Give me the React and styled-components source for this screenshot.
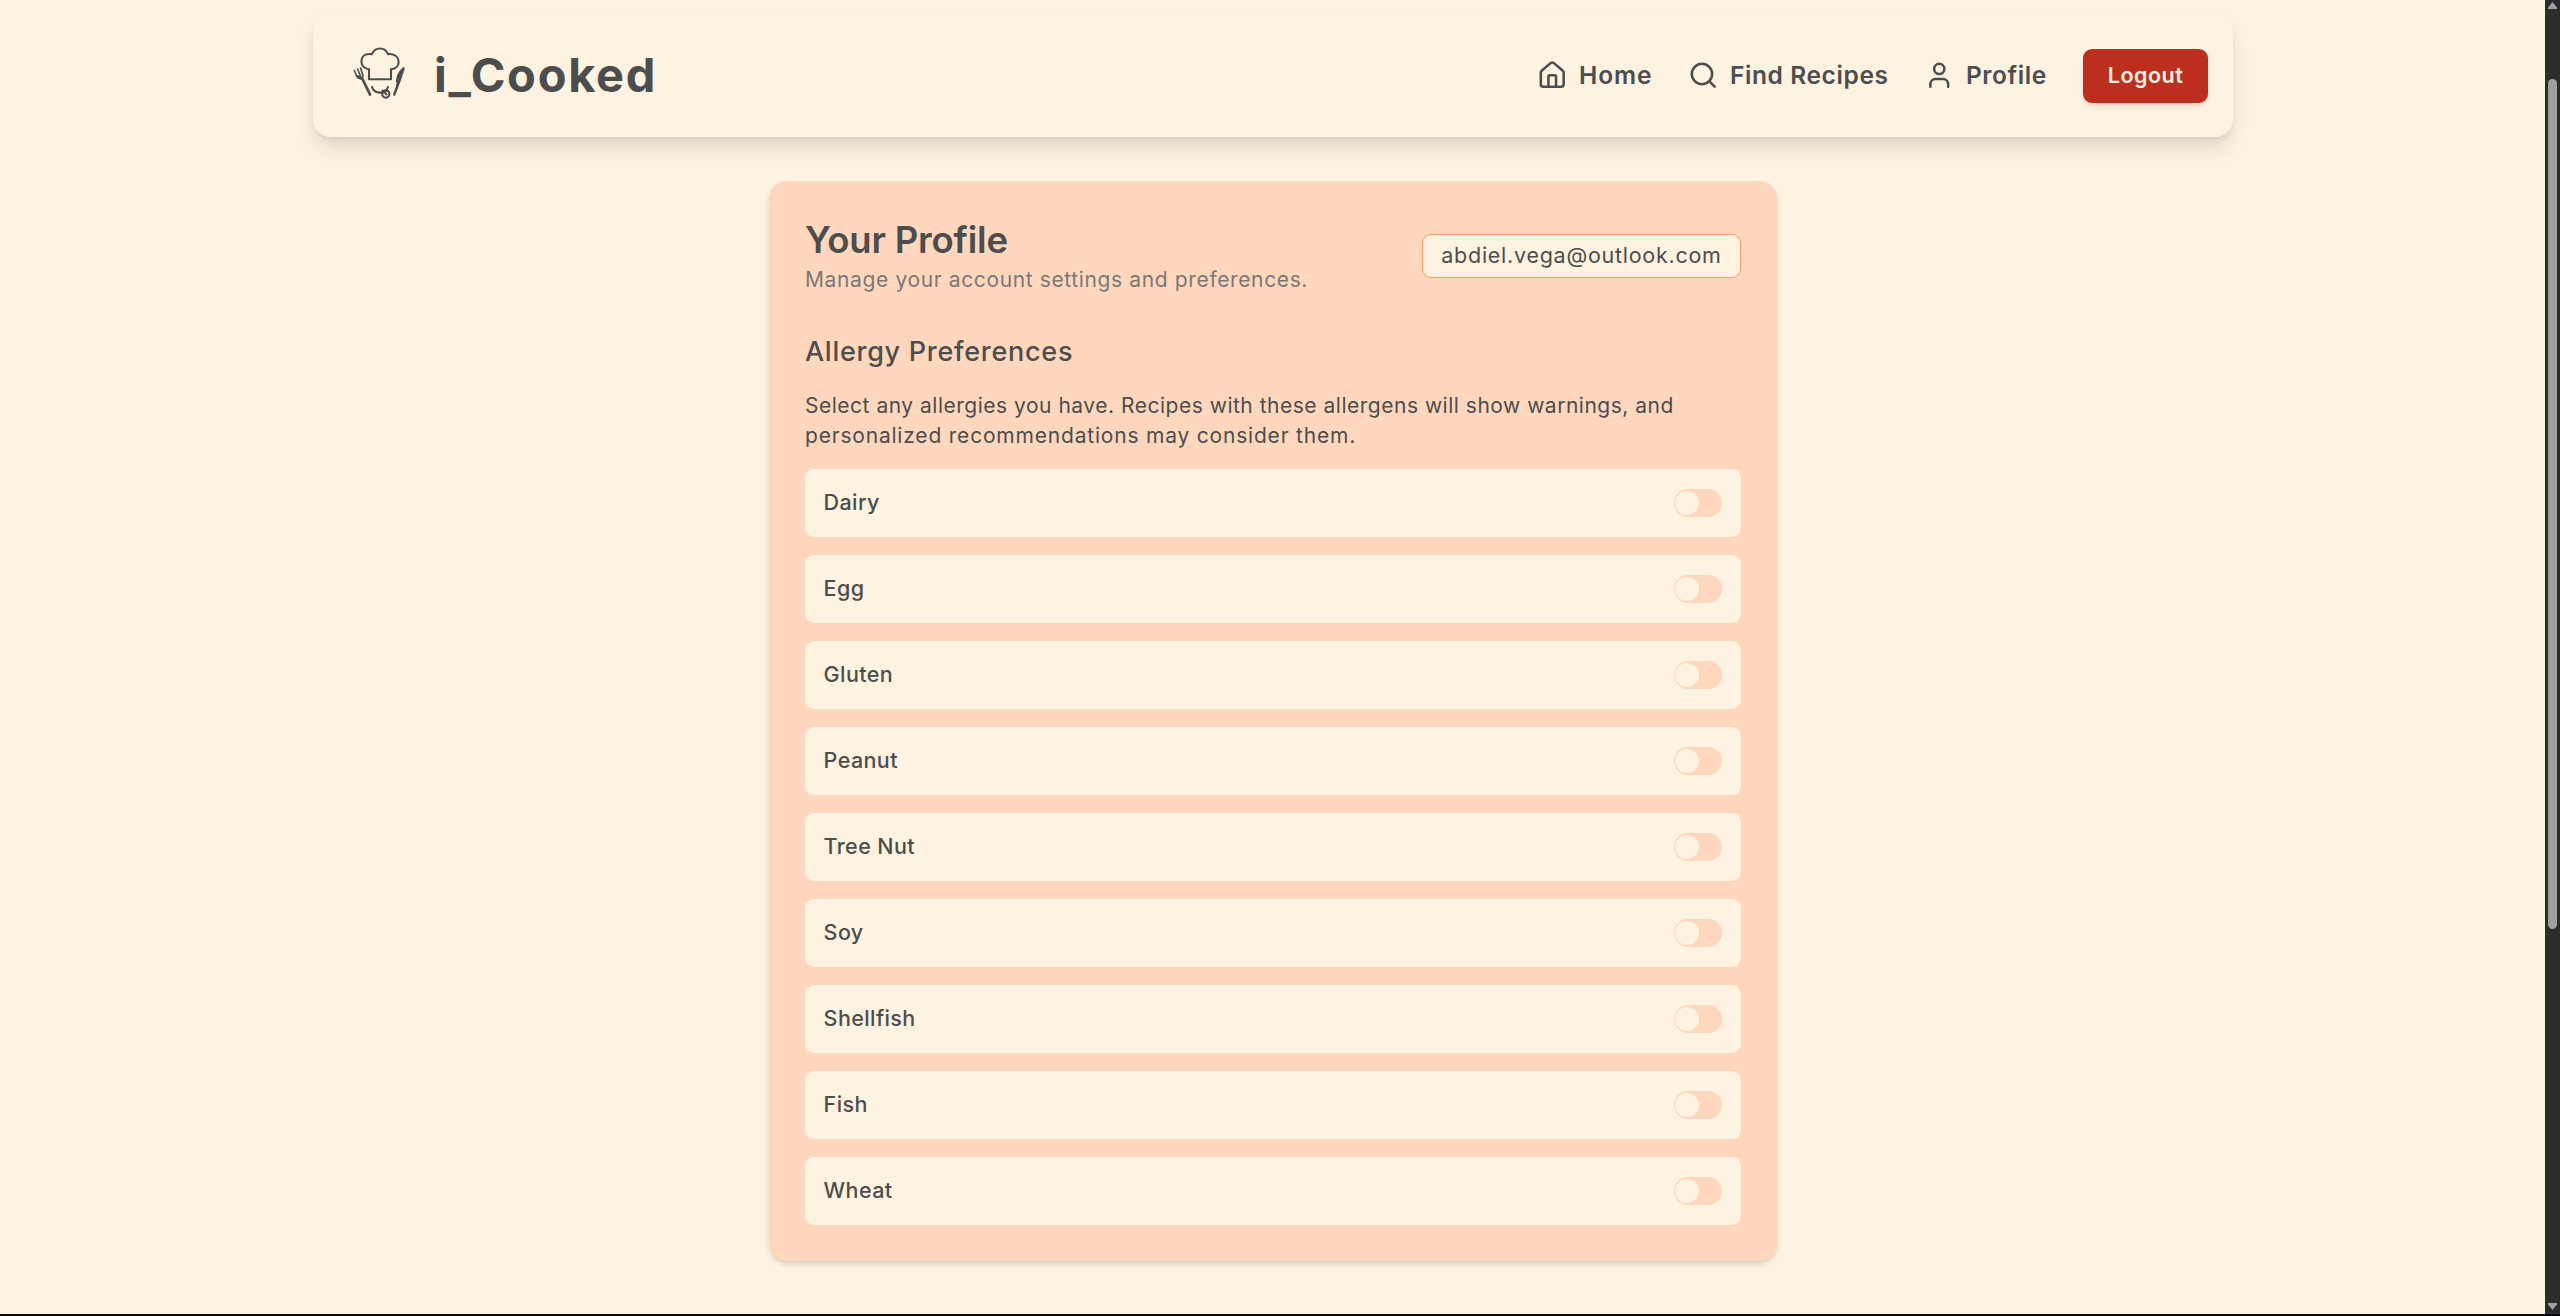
import React from "react";
import styled, { createGlobalStyle } from "styled-components";
import { House, Search, User } from "lucide-react";

const Global = createGlobalStyle`
  *, *::before, *::after { box-sizing: border-box; }
  html { font-size: 18px; overflow: hidden; }
  body { margin: 0; background: #fef2e0; color: #4c4d4d; font-family: Inter, "Open Sans", sans-serif; }
  h1, h2, p, ul { margin: 0; padding: 0; }
`;
const Screen = styled.div`display: flex; height: 1316px; width: 2560px; overflow: hidden; border-bottom: 2px solid #08090c; background: #fef2e0;`;
const Page = styled.div`flex: 1; display: flex; flex-direction: column; align-items: center; padding: 14px 0 0 1px; overflow: hidden;`;
const Header = styled.header`
  display: flex; flex: none; align-items: center; justify-content: space-between; width: 1920px; height: 123px; padding: 0 25px 0 40px;
  border-radius: 18px; background: #fef2e1;
  box-shadow: 0 12px 22px -3px rgba(0, 0, 0, 0.13), 0 4px 8px -4px rgba(0, 0, 0, 0.1);
`;
const Brand = styled.div`display: flex; align-items: center; gap: 29px; padding-bottom: 2px; svg { flex: none; margin-bottom: 3px; }`;
const Fit = styled.span`
  display: inline-block; white-space: nowrap; font-size: ${(p) => p.$size}px; font-weight: ${(p) => p.$weight || 400};
  letter-spacing: ${(p) => p.$track || 0}px; line-height: ${(p) => p.$line || 27}px; color: ${(p) => p.$color || "inherit"};
`;
const Nav = styled.nav`display: flex; align-items: center; gap: 35px;`;
const NavLink = styled.a`display: flex; align-items: center; gap: 11.5px; width: ${(p) => p.$w}px; height: 54px; svg { flex: none; }`;
const Logout = styled.button`
  width: 125px; height: 54px; border: 0; border-radius: 9px; padding: 0; background: #bc2e1e; color: #fef2e0; font-family: inherit;
  box-shadow: 0 4px 6px -1px rgba(0, 0, 0, 0.1), 0 2px 4px -2px rgba(0, 0, 0, 0.1);
`;
const Card = styled.main`
  flex: none; width: 1008px; height: 1080px; margin-top: 44px; padding: 36px; border-radius: 18px; background: #ffd7bd;
  box-shadow: 0 4px 7px -1px rgba(0, 0, 0, 0.12), 0 2px 4px -2px rgba(0, 0, 0, 0.1);
`;
const CardHead = styled.div`display: flex; align-items: center; justify-content: space-between; height: 78px;`;
const Intro = styled.div`padding-top: 2px;`;
const Title = styled.h1`font-size: 36.5px; line-height: 45px; font-weight: 600; letter-spacing: -0.2px;`;
const Email = styled.div`display: flex; align-items: center; justify-content: center; width: 319px; height: 44px; padding-bottom: 1px; border: 1px solid #ff9b69; border-radius: 9px; background: #fef2e0;`;
const Section = styled.h2`margin-top: 39px; line-height: 36px; font-size: 27px; font-weight: 500; letter-spacing: 0.72px;`;
const Copy = styled.p`margin-top: 21px; display: flex; flex-direction: column; align-items: flex-start; line-height: 30px;`;
const List = styled.ul`display: grid; gap: 18px; margin-top: 18px; list-style: none;`;
const Row = styled.li`display: flex; align-items: center; justify-content: space-between; height: 68px; padding: 0 19px 0 18.6px; border-radius: 9px; background: #fef2e0;`;
const Label = styled.span`padding-bottom: 2px; font-size: 21.5px; line-height: 27px; font-weight: 500; letter-spacing: 0.4px;`;
const Toggle = styled.span`display: flex; width: 48px; height: 28px; padding: 2px 1px; border-radius: 14px; background: #ffd7bd;
  &::after { content: ""; width: 24px; height: 24px; border-radius: 50%; background: #fef2e0; }`;
const Rail = styled.div`display: flex; flex-direction: column; align-items: center; width: 15px; height: 1314px; background: #2c2c2c;`;
const Arrow = styled.svg`display: block; flex: none; width: 9px; height: 7px; margin-top: 2px; fill: #9f9f9f;`;
const Thumb = styled.div`flex: none; width: 9px; height: 850px; margin: 70px 0 372px; border-radius: 5px; background: #9f9f9f;`;

const Logo = () => (
  <svg width="52" height="52" viewBox="0 0 52 52" fill="none" stroke="#4c4d4d" strokeWidth="2.1" strokeLinecap="round" strokeLinejoin="round">
    <path d="M16 32.200V22.300C6 21.500 6 7.500 15.500 7q2-.2 3.500.2C22-.5 32-.5 35 7.200q2-.4 4 .1c9 2 9 14-1 15v9.900z" />
    <path d="M19 40c2 7 14 8 16 0" />
    <circle cx="32.800" cy="47" r="3.600" /><path d="M29.500 43.500 33.500 47.500" />
    <path d="m9 31 8 16.500" strokeWidth="2.800" />
    <path d="m1.300 23.500 2.500 6q2 3 5 1.500 2-2 .5-4.500L7.500 21M4.500 22l3 7" strokeWidth="1.600" />
    <path d="M5 29.500 8.500 31.500" strokeWidth="2.800" />
    <path d="m41.300 47.500 5-13.500 4.200-12.500q-6 5.500-6.500 13" fill="#4c4d4d" strokeWidth="2.400" />
  </svg>
);
const allergens = ["Dairy", "Egg", "Gluten", "Peanut", "Tree Nut", "Soy", "Shellfish", "Fish", "Wheat"];

export default function App() {
  return (
    <><Global /><Screen>
      <Page>
        <Header>
          <Brand><Logo /><Fit $size={47} $weight={700} $line={60} $track={1.7}>i_Cooked</Fit></Brand>
          <Nav>
            <NavLink $w={116}><House size={30.5} /><Fit $size={24.5} $weight={600} $track={0.9}>Home</Fit></NavLink>
            <NavLink $w={201}><Search size={30.5} /><Fit $size={24.5} $weight={600} $track={0.6}>Find Recipes</Fit></NavLink>
            <NavLink $w={124}><User size={30.5} /><Fit $size={24.5} $weight={600} $track={0.55}>Profile</Fit></NavLink>
            <Logout><Fit $size={21.5} $weight={600} $track={0.5}>Logout</Fit></Logout>
          </Nav>
        </Header>
        <Card>
          <CardHead>
            <Intro><Title>Your Profile</Title><Fit $size={21} $color="#7a7777" $line={33} $track={0.63}>Manage your account settings and preferences.</Fit></Intro>
            <Email><Fit $size={21.5} $track={0.74}>abdiel.vega@outlook.com</Fit></Email>
          </CardHead>
          <Section>Allergy Preferences</Section>
          <Copy>
            <Fit $size={21} $line={30} $track={0.51}>Select any allergies you have. Recipes with these allergens will show warnings, and</Fit>
            <Fit $size={21} $line={30} $track={0.8}>personalized recommendations may consider them.</Fit>
          </Copy>
          <List>{allergens.map((name) => <Row key={name}><Label>{name}</Label><Toggle /></Row>)}</List>
        </Card>
      </Page>
      <Rail><Arrow viewBox="0 0 9 7"><path d="M4.500 0 9 5.500V7H0V5.500z" /></Arrow><Thumb /><Arrow viewBox="0 0 9 7"><path d="M4.500 7 9 1.500V0H0v1.500z" /></Arrow></Rail>
    </Screen></>
  );
}
